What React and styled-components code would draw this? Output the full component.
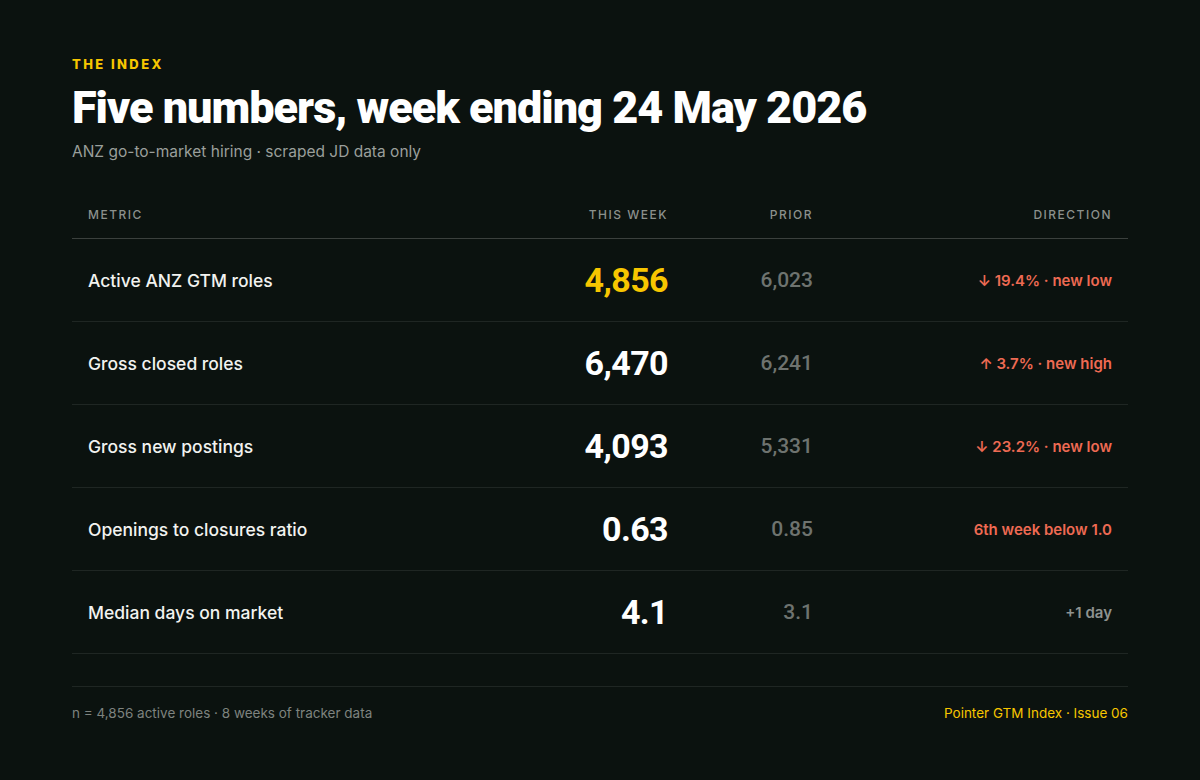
import React from 'react';
import styled, { createGlobalStyle } from 'styled-components';

const GlobalStyle = createGlobalStyle`
    html, body {
        margin: 0;
        padding: 0;
        background: #0b120f;
    }
    body {
        font-family: Inter, "Noto Sans", sans-serif;
        color: #f4f5f2;
    }
`;

const Page = styled.div`
    width: 1200px;
    height: 780px;
    box-sizing: border-box;
    padding: 56px 72px 0;
    background: #0b120f;
`;

const Eyebrow = styled.div`
    font-size: 13px;
    font-weight: 800;
    letter-spacing: 2.4px;
    color: #f7c600;
    line-height: 16px;
`;

const Title = styled.h1`
    margin: 9px 0 0;
    font-family: Roboto, sans-serif;
    font-weight: 900;
    font-size: 45px;
    line-height: 54px;
    letter-spacing: -1px;
    color: #ffffff;
`;

const Subtitle = styled.p`
    margin: 7px 0 0;
    font-size: 15.5px;
    line-height: 20px;
    color: #9a9f9b;
`;

const Table = styled.div`
    margin-top: 31px;
`;

const Row = styled.div`
    display: grid;
    grid-template-columns: 400px 180px 145px 299px;
    align-items: center;
    padding: 0 16px;
    height: ${p => (p.$head ? '45px' : '82px')};
    border-bottom: 1px solid ${p => (p.$head ? '#3b403d' : '#1f2623')};
`;

const HeadCell = styled.div`
    font-size: 12px;
    font-weight: 500;
    letter-spacing: 1.5px;
    text-transform: uppercase;
    color: #8b908c;
    text-align: ${p => p.$align || 'left'};
    padding-bottom: 2px;
`;

const Metric = styled.div`
    font-size: 17.5px;
    font-weight: 500;
    color: #f2f3f0;
`;

const Value = styled.div`
    font-family: Roboto, sans-serif;
    font-weight: 700;
    font-size: 34px;
    letter-spacing: -0.6px;
    text-align: right;
    color: ${p => (p.$highlight ? '#f7c600' : '#ffffff')};
`;

const Prior = styled.div`
    font-family: Roboto, sans-serif;
    font-weight: 500;
    font-size: 21px;
    text-align: right;
    color: #6e736f;
`;

const Direction = styled.div`
    font-size: 15px;
    font-weight: 600;
    text-align: right;
    color: ${p => (p.$tone === 'muted' ? '#8e938f' : '#ee6a53')};
`;

const Footer = styled.div`
    margin-top: 32px;
    border-top: 1px solid #1f2623;
    display: flex;
    justify-content: space-between;
    align-items: center;
    height: 52px;
    font-size: 13.5px;
`;

const FootNote = styled.span`
    color: #7e837f;
`;

const Brand = styled.span`
    color: #f7c600;
`;

const rows = [
    { metric: 'Active ANZ GTM roles', value: '4,856', prior: '6,023', dir: '↓ 19.4% · new low', highlight: true },
    { metric: 'Gross closed roles', value: '6,470', prior: '6,241', dir: '↑ 3.7% · new high' },
    { metric: 'Gross new postings', value: '4,093', prior: '5,331', dir: '↓ 23.2% · new low' },
    { metric: 'Openings to closures ratio', value: '0.63', prior: '0.85', dir: '6th week below 1.0' },
    { metric: 'Median days on market', value: '4.1', prior: '3.1', dir: '+1 day', tone: 'muted' },
];

const App = () => {
    return (
        <>
            <GlobalStyle />
            <Page>
                <Eyebrow>THE INDEX</Eyebrow>
                <Title>Five numbers, week ending 24 May 2026</Title>
                <Subtitle>ANZ go-to-market hiring · scraped JD data only</Subtitle>

                <Table>
                    <Row $head>
                        <HeadCell>Metric</HeadCell>
                        <HeadCell $align="right">This week</HeadCell>
                        <HeadCell $align="right">Prior</HeadCell>
                        <HeadCell $align="right">Direction</HeadCell>
                    </Row>
                    {rows.map(r => (
                        <Row key={r.metric}>
                            <Metric>{r.metric}</Metric>
                            <Value $highlight={r.highlight}>{r.value}</Value>
                            <Prior>{r.prior}</Prior>
                            <Direction $tone={r.tone}>{r.dir}</Direction>
                        </Row>
                    ))}
                </Table>

                <Footer>
                    <FootNote>n = 4,856 active roles · 8 weeks of tracker data</FootNote>
                    <Brand>Pointer GTM Index · Issue 06</Brand>
                </Footer>
            </Page>
        </>
    );
};

export default App;
